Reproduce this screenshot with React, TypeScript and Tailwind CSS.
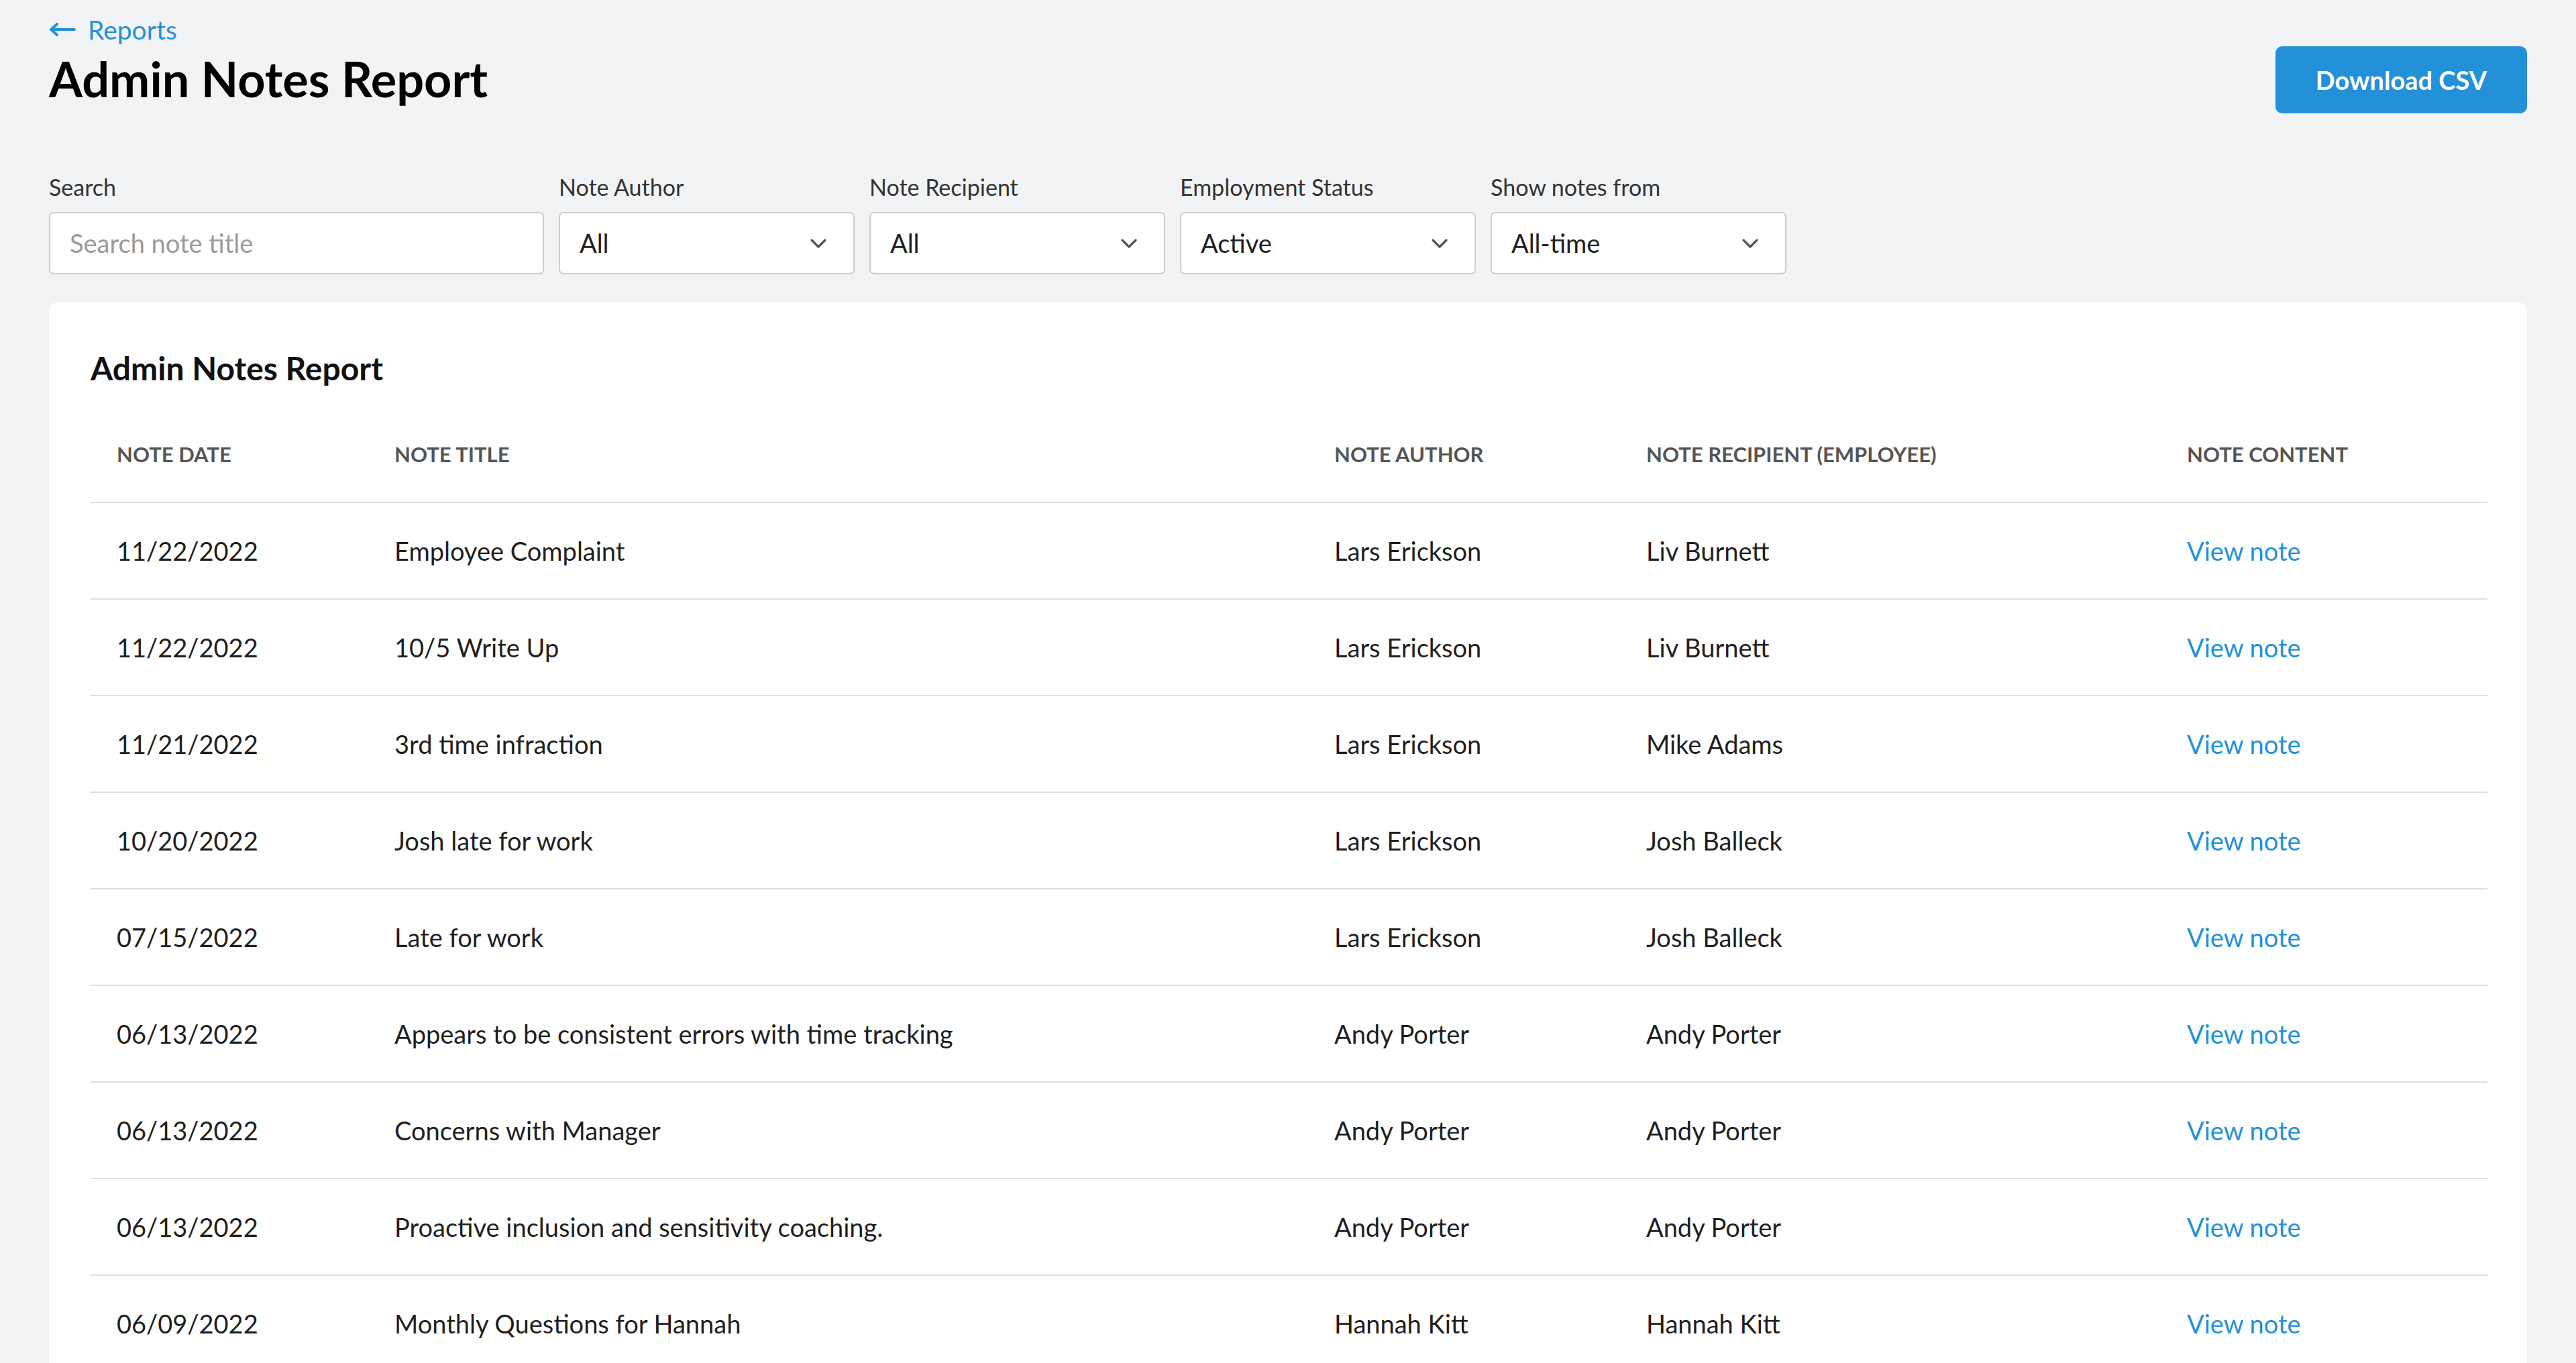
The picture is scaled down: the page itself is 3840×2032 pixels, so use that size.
import { ChevronDown } from 'lucide-react'

type Note = {
  date: string
  title: string
  author: string
  recipient: string
}

const NOTES: Note[] = [
  { date: '11/22/2022', title: 'Employee Complaint', author: 'Lars Erickson', recipient: 'Liv Burnett' },
  { date: '11/22/2022', title: '10/5 Write Up', author: 'Lars Erickson', recipient: 'Liv Burnett' },
  { date: '11/21/2022', title: '3rd time infraction', author: 'Lars Erickson', recipient: 'Mike Adams' },
  { date: '10/20/2022', title: 'Josh late for work', author: 'Lars Erickson', recipient: 'Josh Balleck' },
  { date: '07/15/2022', title: 'Late for work', author: 'Lars Erickson', recipient: 'Josh Balleck' },
  {
    date: '06/13/2022',
    title: 'Appears to be consistent errors with time tracking',
    author: 'Andy Porter',
    recipient: 'Andy Porter',
  },
  { date: '06/13/2022', title: 'Concerns with Manager', author: 'Andy Porter', recipient: 'Andy Porter' },
  {
    date: '06/13/2022',
    title: 'Proactive inclusion and sensitivity coaching.',
    author: 'Andy Porter',
    recipient: 'Andy Porter',
  },
  { date: '06/09/2022', title: 'Monthly Questions for Hannah', author: 'Hannah Kitt', recipient: 'Hannah Kitt' },
]

const FILTERS = [
  { label: 'Note Author', value: 'All' },
  { label: 'Note Recipient', value: 'All' },
  { label: 'Employment Status', value: 'Active' },
  { label: 'Show notes from', value: 'All-time' },
]

function FilterSelect({ label, value }: { label: string; value: string }) {
  return (
    <div className="flex w-[441px] flex-col">
      <span className="h-[40px] text-[34px] leading-[40px] text-[#333]">{label}</span>
      <div
        className="mt-[17px] flex h-[93px] items-center justify-between rounded-[7px] border-2
          border-[#cdcdcd] bg-white pr-[32px] pl-[29px]"
      >
        <span className="text-[38px] text-[#1f1f1f]">{value}</span>
        <ChevronDown className="h-[40px] w-[40px] text-[#555]" strokeWidth={2} />
      </div>
    </div>
  )
}

function BackArrow() {
  return (
    <svg viewBox="0 0 40 20" className="h-[20px] w-[40px]" fill="none">
      <path
        d="M38 10H4M12 2L3 10l9 8"
        stroke="#2391d8"
        strokeWidth="4"
        strokeLinecap="round"
        strokeLinejoin="round"
      />
    </svg>
  )
}

export default function App() {
  return (
    <div
      className="min-h-screen bg-[#f2f3f5] px-[73px] pt-[24px]"
      style={{ fontFamily: 'Lato, "Liberation Sans", sans-serif' }}
    >
      <div className="flex items-start justify-between">
        <div>
          <a className="flex h-[40px] items-center gap-[18px] text-[39px] text-[#2391d8]" href="#">
            <BackArrow />
            Reports
          </a>
          <h1 className="mt-[13px] h-[80px] text-[72px] leading-[80px] font-bold text-black">
            Admin Notes Report
          </h1>
        </div>
        <button
          type="button"
          className="mt-[45px] h-[100px] w-[375px] rounded-[10px] bg-[#2391d8] text-[38px] font-bold
            text-white"
        >
          Download CSV
        </button>
      </div>

      <div className="mt-[90px] flex gap-[22px]">
        <div className="flex w-[738px] flex-col">
          <span className="h-[40px] text-[34px] leading-[40px] text-[#333]">Search</span>
          <div
            className="mt-[17px] flex h-[93px] items-center rounded-[7px] border-2 border-[#cdcdcd]
              bg-white px-[29px]"
          >
            <span className="text-[38px] text-[#9a9a9a]">Search note title</span>
          </div>
        </div>
        {FILTERS.map((f) => (
          <FilterSelect key={f.label} label={f.label} value={f.value} />
        ))}
      </div>

      <div className="mt-[42px] rounded-t-[12px] bg-white pt-[68px] pr-[59px] pb-[40px] pl-[62px]">
        <h2 className="h-[60px] text-[48px] leading-[60px] font-bold text-[#111]">Admin Notes Report</h2>
        <table className="mt-[28px] w-full table-fixed text-left">
          <colgroup>
            <col className="w-[414px]" />
            <col className="w-[1401px]" />
            <col className="w-[465px]" />
            <col className="w-[806px]" />
            <col />
          </colgroup>
          <thead>
            <tr className="h-[142px] border-b-2 border-[#dedede] text-[31px] font-bold text-[#555] uppercase">
              <th className="pl-[39px] font-bold">Note Date</th>
              <th className="pl-[39px] font-bold">Note Title</th>
              <th className="pl-[39px] font-bold">Note Author</th>
              <th className="pl-[39px] font-bold">Note Recipient (Employee)</th>
              <th className="pl-[39px] font-bold">Note Content</th>
            </tr>
          </thead>
          <tbody className="text-[38px] text-[#1f1f1f]">
            {NOTES.map((note, i) => (
              <tr key={i} className="h-[144px] border-b-2 border-[#dedede]">
                <td className="pl-[39px]">{note.date}</td>
                <td className="pl-[39px]">{note.title}</td>
                <td className="pl-[39px]">{note.author}</td>
                <td className="pl-[39px]">{note.recipient}</td>
                <td className="pl-[39px]">
                  <a href="#" className="text-[#2391d8]">
                    View note
                  </a>
                </td>
              </tr>
            ))}
          </tbody>
        </table>
      </div>
    </div>
  )
}
